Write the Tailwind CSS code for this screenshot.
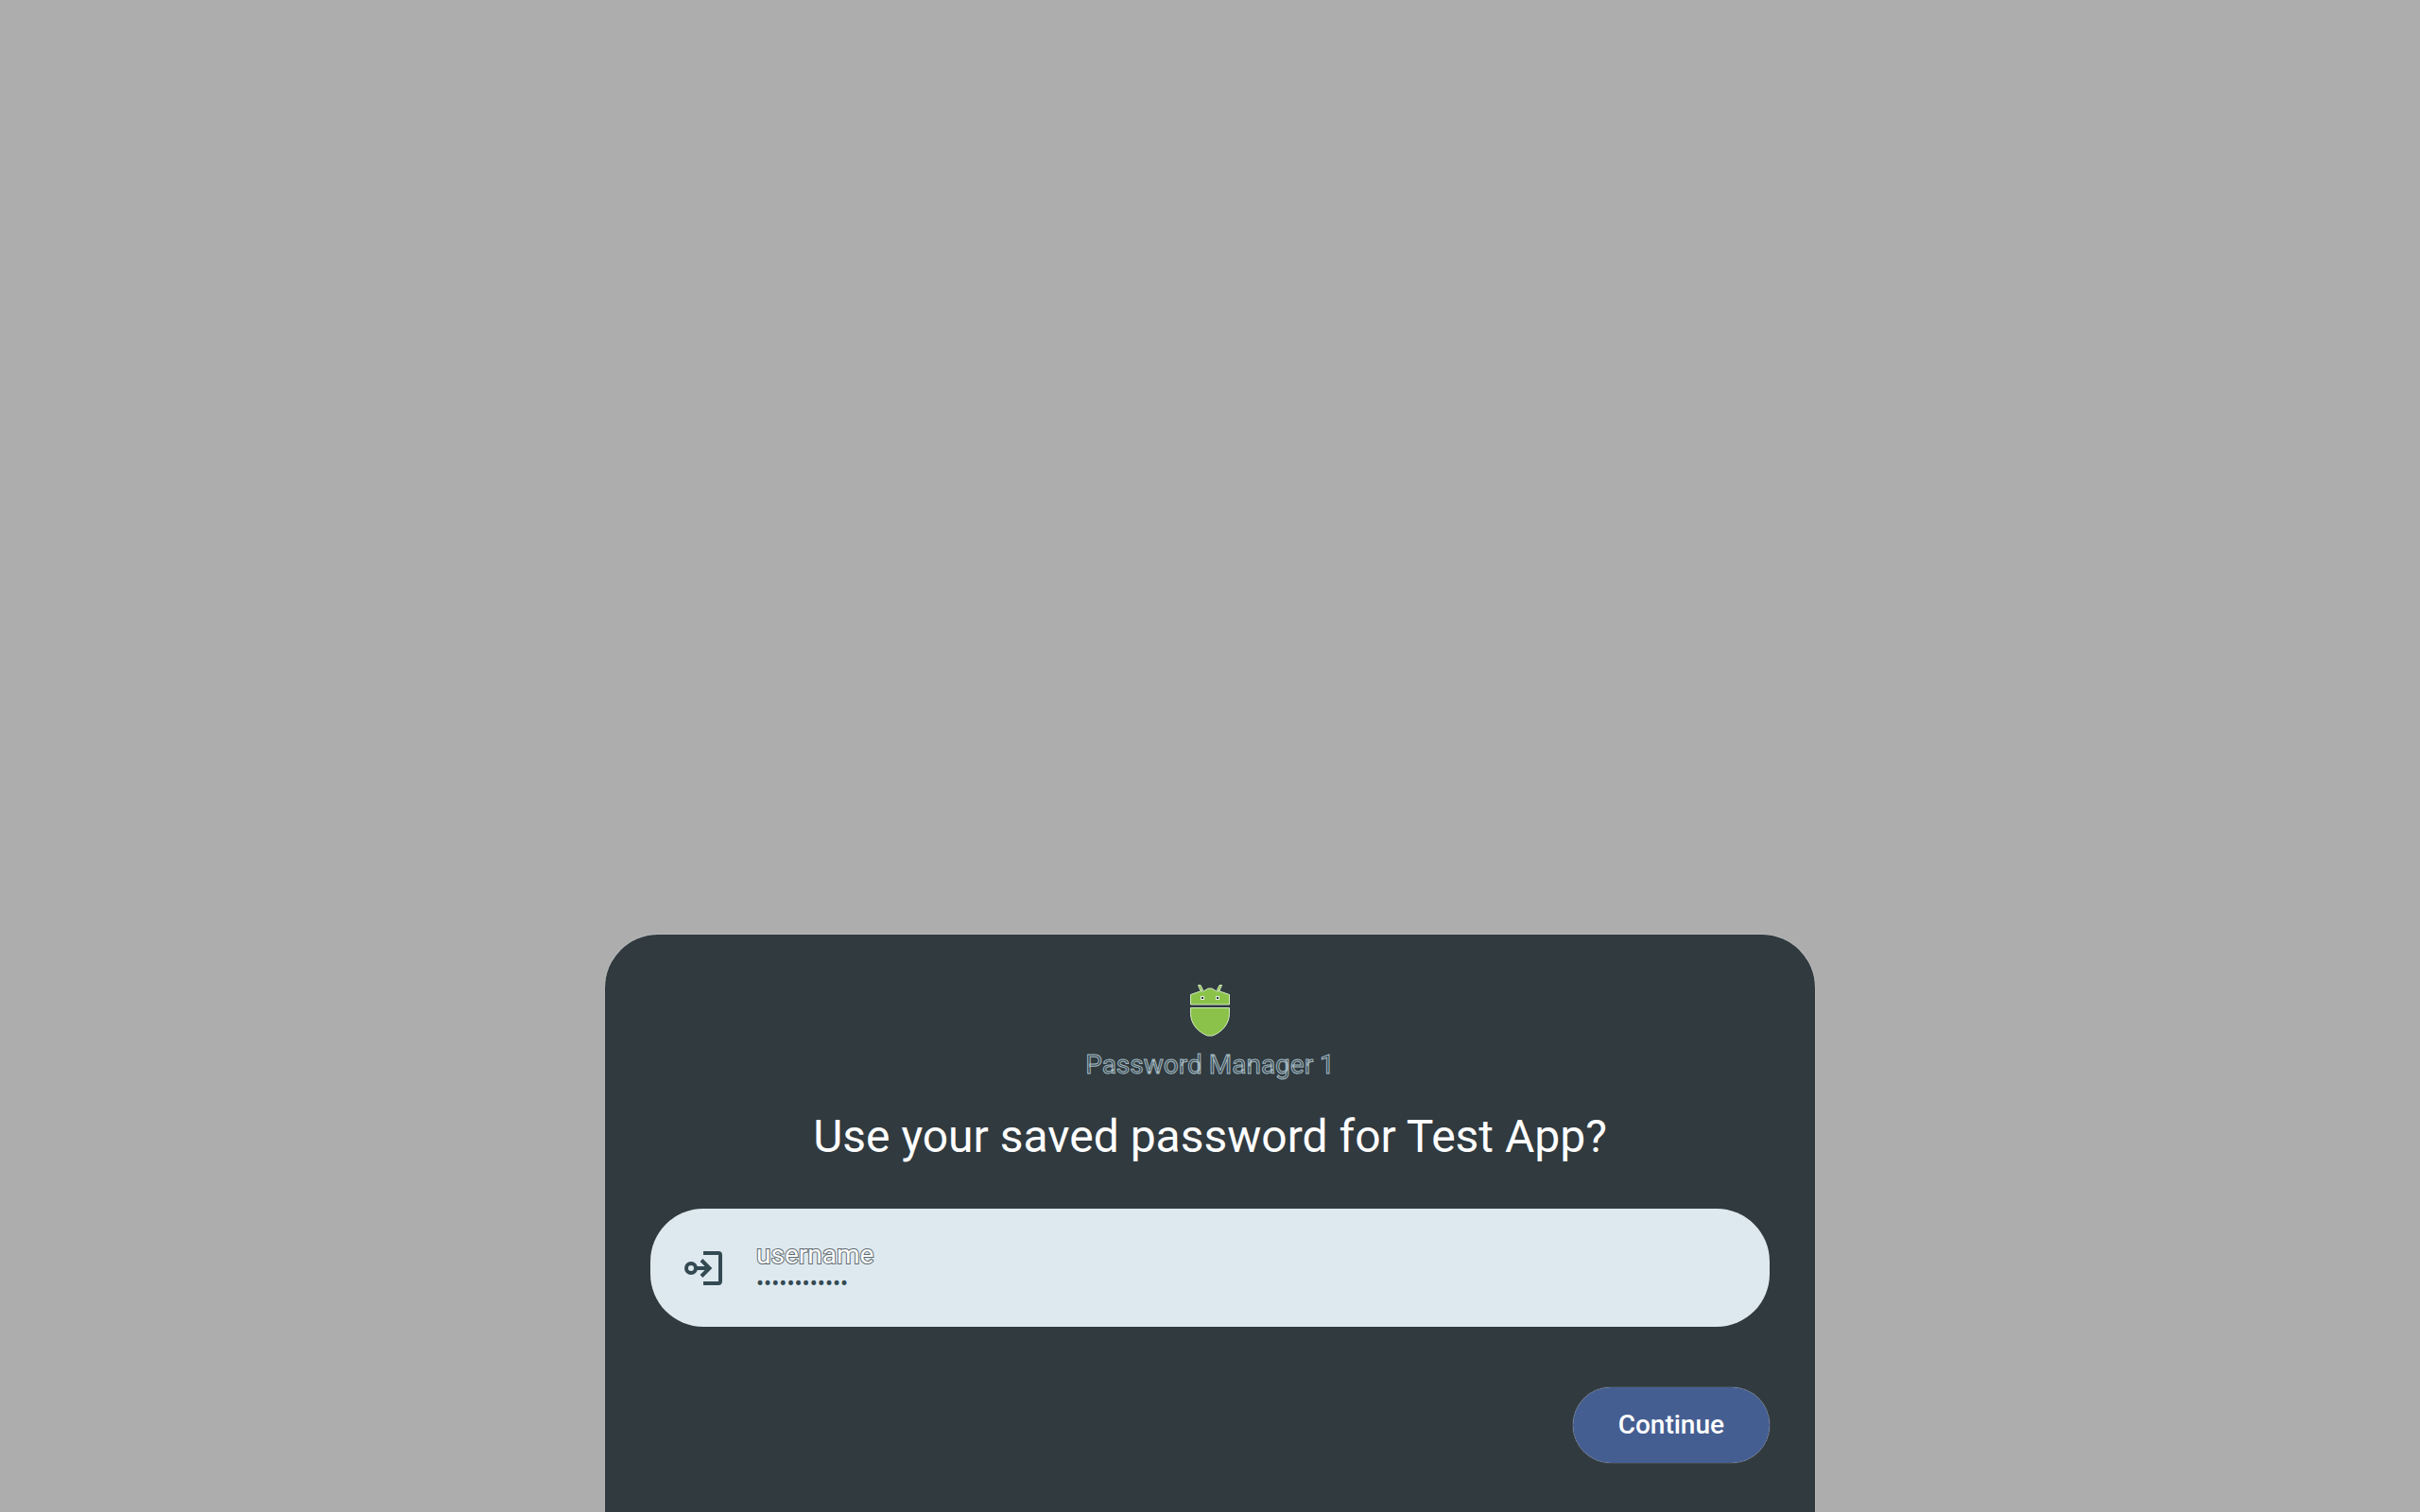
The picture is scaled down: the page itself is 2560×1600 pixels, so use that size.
<!DOCTYPE html>
<html lang="en">
<head>
<meta charset="utf-8">
<meta name="viewport" content="width=device-width, initial-scale=1">
<title>Saved password</title>
<script src="https://cdn.jsdelivr.net/npm/@tailwindcss/browser@4"></script>
</head>
<body class="flex min-h-screen flex-col items-center justify-end bg-[#adadad] font-[Roboto,sans-serif]">
<main role="dialog" aria-labelledby="title" class="flex w-1/2 flex-col items-center rounded-t-[56px] bg-[#303a3f] px-12 pt-[52px] pb-[52px] shadow-[0_0_1px_#ffffff]">
  <svg class="h-14 w-12" viewBox="0 0 48 56" aria-hidden="true">
    <g fill="#8bc34a" stroke="#d5e8c4" stroke-width="1">
      <path d="M11.500 1.500h2.500l2.500 5-2.500 1zM36.500 1.500h-2.500l-2.500 5 2.500 1z"/>
      <path d="M3.500 11.500L15 7.500l2 .5 5-3h4l5 3 2-.5 11.500 4v10.500h-41z"/>
      <path d="M3.500 25.500h41v6c0 11-8 20-18 23.500h-5C11.500 51.500 3.500 42.500 3.500 31.500z"/>
    </g>
    <path d="M14 13h4v4h-4zM30 13h4v4h-4z" fill="#e3f0df"/>
    <path d="M15 14h2v2h-2zM31 14h2v2h-2z" fill="#303a3f"/>
  </svg>
  <p class="mt-3 text-[28px] leading-9 text-[#354a54] [-webkit-text-stroke:1px_#a3b6be]">Password Manager 1</p>
  <h1 id="title" class="mt-[30px] text-5xl leading-14 text-white">Use your saved password for Test App?</h1>
  <button type="button" class="mt-12 flex h-[125px] w-full items-center gap-8 rounded-[56px] bg-[#dee9ef] px-8 text-left">
    <svg class="size-12" viewBox="0 0 48 48" fill="none" stroke="#344a53" stroke-width="4" aria-hidden="true">
      <path d="M24 8h16a2 2 0 0 1 2 2v28a2 2 0 0 1-2 2H24"/>
      <circle cx="11" cy="24" r="5"/>
      <path d="M16 24h15M22 15.500l8.500 8.500-8.500 8.500"/>
    </svg>
    <span class="flex flex-col">
      <span class="text-[28px] leading-8 text-white [-webkit-text-stroke:2px_#5d686e] [paint-order:stroke_fill]">username</span>
      <span class="text-2xl leading-7 text-[#344a53]">••••••••••••</span>
    </span>
  </button>
  <button type="button" class="mt-16 h-20 self-end rounded-full bg-[#455e91] px-12 text-[28px] font-medium text-white shadow-[0_0_1px_#ffffff]">Continue</button>
</main>
</body>
</html>
